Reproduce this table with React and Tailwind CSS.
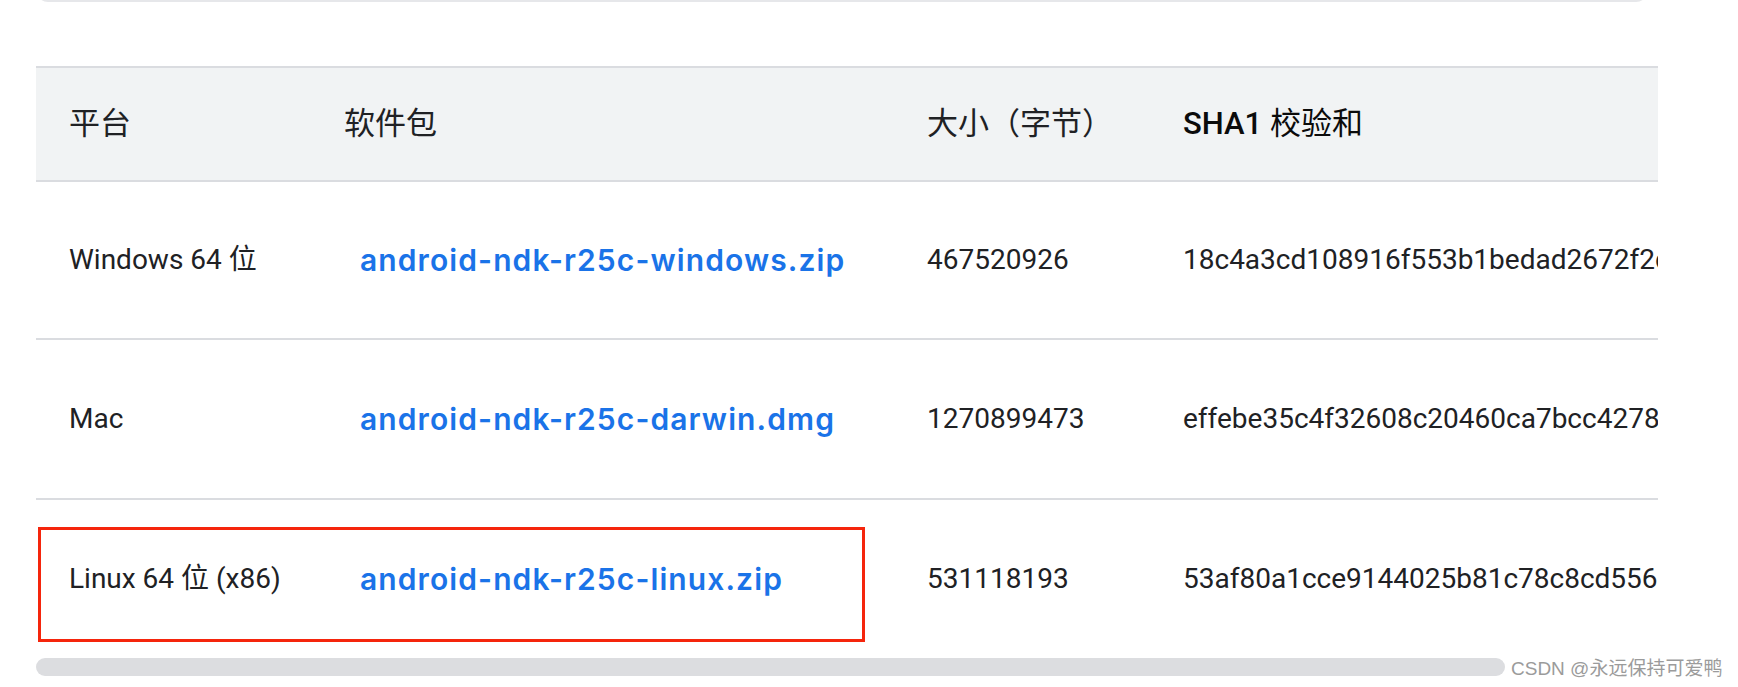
import React from "react";

const rows = [
  {
    platform: "Windows 64 位",
    file: "android-ndk-r25c-windows.zip",
    size: "467520926",
    sha: "18c4a3cd108916f553b1bedad2672f2d9f7bd4d3",
    h: "h-[158px]",
    border: true,
  },
  {
    platform: "Mac",
    file: "android-ndk-r25c-darwin.dmg",
    size: "1270899473",
    sha: "effebe35c4f32608c20460ca7bcc427874a0e7b4",
    h: "h-[160px]",
    border: true,
  },
  {
    platform: "Linux 64 位 (x86)",
    file: "android-ndk-r25c-linux.zip",
    size: "531118193",
    sha: "53af80a1cce9144025b81c78c8cd556bff42bd0e",
    h: "h-[158px]",
    border: false,
  },
];

export default function App() {
  return (
    <div className="relative w-[1738px] h-[687px] overflow-hidden bg-white font-['Roboto','Noto_Sans_CJK_SC',sans-serif] text-[#202124]">
      {/* bottom edge of the card above */}
      <div className="ml-[36px] -mt-[10px] h-[12px] w-[1612px] rounded-b-[12px] border-x-2 border-b-2 border-[#e6e7ea]" />

      {/* table viewport */}
      <div className="ml-[36px] mt-[64px] w-[1622px] overflow-hidden">
        <div className="w-[2400px]">
          {/* header */}
          <div className="grid h-[116px] grid-cols-[275px_583px_256px_1286px] items-center border-y-2 border-[#dadce0] bg-[#f1f3f4] text-[31px]">
            <div className="pl-[33px]">平台</div>
            <div className="pl-[33px]">软件包</div>
            <div className="pl-[33px]">大小（字节）</div>
            <div className="pl-[33px] text-[#0b0b0b]">
              <span className="font-medium">SHA1</span> 校验和
            </div>
          </div>
          {rows.map((r) => (
            <div
              key={r.file}
              className={`grid ${r.h} grid-cols-[275px_583px_256px_1286px] items-center text-[28px] ${
                r.border ? "border-b-2 border-[#dadce0]" : ""
              }`}
            >
              <div className="pl-[33px] whitespace-nowrap">{r.platform}</div>
              <div className="pl-[49px] whitespace-nowrap">
                <a className="font-['Inter',sans-serif] text-[30px] font-semibold tracking-[1.1px] text-[#1a73e8]">
                  {r.file}
                </a>
              </div>
              <div className="pl-[33px] whitespace-nowrap">{r.size}</div>
              <div className="pl-[33px] whitespace-nowrap">{r.sha}</div>
            </div>
          ))}
        </div>
      </div>

      {/* horizontal scrollbar */}
      <div className="ml-[36px] h-[18px] w-[1469px] rounded-[9px] bg-[#dcdde0]" />

      {/* red annotation box */}
      <div className="absolute left-[38px] top-[527px] h-[115px] w-[827px] border-[3px] border-[#f5250c]" />

      {/* watermark */}
      <div className="absolute left-[1511px] top-[656px] whitespace-nowrap font-['Liberation_Sans','Noto_Sans_CJK_SC',sans-serif] text-[19px] leading-[26px] text-[#9b9b9b]">
        CSDN @永远保持可爱鸭
      </div>
    </div>
  );
}
